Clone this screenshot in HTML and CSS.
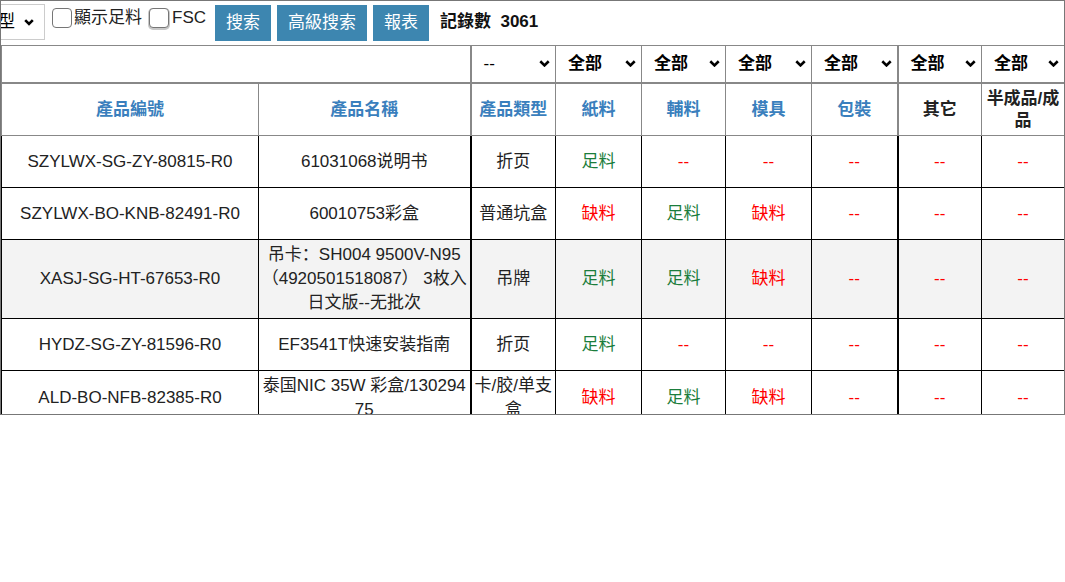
FILE: index.html
```html
<!DOCTYPE html>
<html lang="zh">
<head>
<meta charset="utf-8">
<title>產品列表</title>
<link rel="stylesheet" href="styles.css">
</head>
<body>
<div class="frame">
  <div class="toolbar">
    <div class="tsel"><span class="tsel-text">型</span><svg class="chev-s" width="10" height="7" viewBox="0 0 10 7"><polyline points="1.2,1.2 5,5 8.8,1.2" fill="none" stroke="#000" stroke-width="2.6"/></svg></div>
    <label class="chk"><span class="box"></span><span>顯示足料</span></label>
    <label class="chk chk2"><span class="box box2"></span><span>FSC</span></label>
    <button class="btn first">搜索</button>
    <button class="btn">高級搜索</button>
    <button class="btn">報表</button>
    <span class="count">記錄數&nbsp; 3061</span>
  </div>
  <table class="grid">
    <colgroup>
      <col class="c1"><col class="c2"><col class="c3"><col class="c4"><col class="c5"><col class="c6"><col class="c7"><col class="c8"><col class="c9">
    </colgroup>
    <thead>
      <tr class="filter">
        <th colspan="2"></th>
        <th class="t"><div class="sel"><span class="dash">--</span><svg width="11" height="7" viewBox="0 0 11 7"><polyline points="1.3,1.3 5.5,5.4 9.7,1.3" fill="none" stroke="#000" stroke-width="2.6"/></svg></div></th>
        <th><div class="sel"><span class="all">全部</span><svg width="11" height="7" viewBox="0 0 11 7"><polyline points="1.3,1.3 5.5,5.4 9.7,1.3" fill="none" stroke="#000" stroke-width="2.6"/></svg></div></th>
        <th><div class="sel"><span class="all">全部</span><svg width="11" height="7" viewBox="0 0 11 7"><polyline points="1.3,1.3 5.5,5.4 9.7,1.3" fill="none" stroke="#000" stroke-width="2.6"/></svg></div></th>
        <th><div class="sel"><span class="all">全部</span><svg width="11" height="7" viewBox="0 0 11 7"><polyline points="1.3,1.3 5.5,5.4 9.7,1.3" fill="none" stroke="#000" stroke-width="2.6"/></svg></div></th>
        <th><div class="sel"><span class="all">全部</span><svg width="11" height="7" viewBox="0 0 11 7"><polyline points="1.3,1.3 5.5,5.4 9.7,1.3" fill="none" stroke="#000" stroke-width="2.6"/></svg></div></th>
        <th class="t"><div class="sel"><span class="all">全部</span><svg width="11" height="7" viewBox="0 0 11 7"><polyline points="1.3,1.3 5.5,5.4 9.7,1.3" fill="none" stroke="#000" stroke-width="2.6"/></svg></div></th>
        <th><div class="sel"><span class="all">全部</span><svg width="11" height="7" viewBox="0 0 11 7"><polyline points="1.3,1.3 5.5,5.4 9.7,1.3" fill="none" stroke="#000" stroke-width="2.6"/></svg></div></th>
      </tr>
      <tr class="head">
        <th class="blue">產品編號</th>
        <th class="blue">產品名稱</th>
        <th class="blue t">產品類型</th>
        <th class="blue">紙料</th>
        <th class="blue">輔料</th>
        <th class="blue">模具</th>
        <th class="blue">包裝</th>
        <th class="t">其它</th>
        <th>半成品/成品</th>
      </tr>
    </thead>
    <tbody>
      <tr>
        <td>SZYLWX-SG-ZY-80815-R0</td>
        <td class="name">61031068说明书</td>
        <td class="t">折页</td>
        <td class="ok">足料</td>
        <td class="na">--</td>
        <td class="na">--</td>
        <td class="na">--</td>
        <td class="na t">--</td>
        <td class="na">--</td>
      </tr>
      <tr>
        <td>SZYLWX-BO-KNB-82491-R0</td>
        <td class="name">60010753彩盒</td>
        <td class="t">普通坑盒</td>
        <td class="bad">缺料</td>
        <td class="ok">足料</td>
        <td class="bad">缺料</td>
        <td class="na">--</td>
        <td class="na t">--</td>
        <td class="na">--</td>
      </tr>
      <tr class="hl">
        <td>XASJ-SG-HT-67653-R0</td>
        <td class="name">吊卡：SH004 9500V-N95（4920501518087） 3枚入<br>日文版--无批次</td>
        <td class="t">吊牌</td>
        <td class="ok">足料</td>
        <td class="ok">足料</td>
        <td class="bad">缺料</td>
        <td class="na">--</td>
        <td class="na t">--</td>
        <td class="na">--</td>
      </tr>
      <tr>
        <td>HYDZ-SG-ZY-81596-R0</td>
        <td class="name">EF3541T快速安装指南</td>
        <td class="t">折页</td>
        <td class="ok">足料</td>
        <td class="na">--</td>
        <td class="na">--</td>
        <td class="na">--</td>
        <td class="na t">--</td>
        <td class="na">--</td>
      </tr>
      <tr>
        <td>ALD-BO-NFB-82385-R0</td>
        <td class="name">泰国NIC 35W 彩盒/13029475</td>
        <td class="t wrap">卡/胶/单支盒</td>
        <td class="bad">缺料</td>
        <td class="ok">足料</td>
        <td class="bad">缺料</td>
        <td class="na">--</td>
        <td class="na t">--</td>
        <td class="na">--</td>
      </tr>
    </tbody>
  </table>
</div>
</body>
</html>
```

FILE: styles.css
```css
html, body {
  margin: 0;
  padding: 0;
  background: #fff;
}
body {
  font-family: "Liberation Sans", "Noto Sans CJK SC", sans-serif;
  font-size: 17px;
  color: #222;
}
.frame {
  width: 1065px;
  height: 415px;
  box-sizing: border-box;
  border: 1px solid #777;
  overflow: hidden;
}
.toolbar {
  display: flex;
  align-items: flex-start;
  height: 44px;
  box-sizing: border-box;
  padding-top: 3px;
}
.tsel {
  width: 44px;
  height: 36px;
  box-sizing: border-box;
  border: 1px solid #ccc;
  border-left: none;
  display: flex;
  align-items: center;
  justify-content: space-between;
  padding-right: 10px;
  color: #000;
}
.tsel-text {
  margin-left: -3px;
  line-height: 20px;
}
.chk {
  display: flex;
  align-items: center;
  height: 21px;
  margin-top: 3px;
  margin-left: 7px;
  line-height: 21px;
  color: #222;
}
.box {
  width: 20px;
  height: 20px;
  box-sizing: border-box;
  border: 1px solid #767676;
  border-radius: 4px;
  background: #fff;
  margin-right: 2px;
}
.box2 {
  margin-right: 3px;
  box-shadow: 0 1px 0 1px #c8c8c8;
}
.btn {
  height: 36px;
  margin-top: 1px;
  margin-left: 6px;
  padding: 0 11px;
  border: none;
  border-radius: 0;
  background: #3d86b0;
  color: #fff;
  font-family: inherit;
  font-size: 17px;
  line-height: 36px;
}
.btn.first {
  margin-left: 9px;
}
.count {
  margin-left: 11px;
  margin-top: 2px;
  line-height: 32px;
  font-weight: bold;
  color: #111;
}
.grid {
  width: 1063px;
  table-layout: fixed;
  border-collapse: collapse;
}
.c1 { width: 257px; }
.c2 { width: 212px; }
.c3 { width: 85px; }
.c4 { width: 86px; }
.c5 { width: 84px; }
.c6 { width: 86px; }
.c7 { width: 86px; }
.c8 { width: 84px; }
.c9 { width: 83px; }
th, td {
  border: 1px solid #000;
  padding: 3px 3px;
  text-align: center;
  vertical-align: middle;
  line-height: 24px;
}
thead th {
  border-color: #888;
}
.filter {
  height: 37px;
}
.filter th {
  padding: 0;
  border-bottom-width: 2px;
}
.sel {
  display: flex;
  align-items: center;
  justify-content: space-between;
  padding: 0 5px 0 12px;
  color: #000;
}
.dash {
  font-weight: normal;
}
.all {
  font-weight: bold;
}
.head {
  height: 53px;
}
.head th {
  line-height: 22px;
  padding-top: 4px;
  font-weight: bold;
  color: #222;
}
.head th.blue {
  color: #3a7fbd;
}
tbody tr {
  height: 52px;
}
.t {
  border-left-width: 2px;
}
.name {
  word-break: break-all;
  padding-left: 1px;
  padding-right: 1px;
}
.wrap {
  word-break: break-all;
}
.ok {
  color: #1b7d3c;
}
.bad {
  color: #f00;
}
.na {
  color: #f00;
}
.hl td {
  background: #f3f3f3;
}
```
